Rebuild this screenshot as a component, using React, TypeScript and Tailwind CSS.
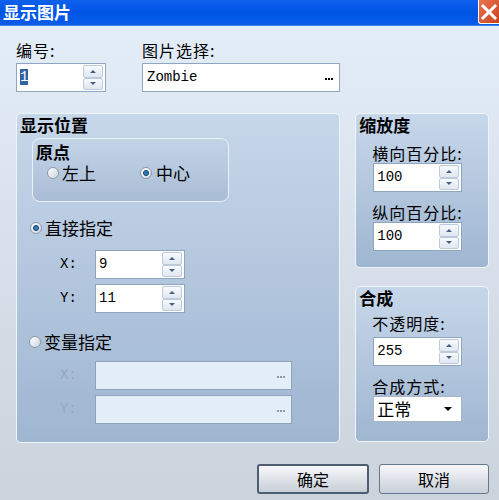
import type { ReactNode } from "react"

const cjk = "font-['Noto_Sans_CJK_SC','Noto_Sans_CJK_JP',sans-serif]"
const mono = "font-['Liberation_Mono',monospace]"

function Tri({ down }: { down?: boolean }) {
  return down ? (
    <div className="w-0 h-0 border-x-[3px] border-x-transparent border-t-[3px] border-t-[#4a5f80]" />
  ) : (
    <div className="w-0 h-0 border-x-[3px] border-x-transparent border-b-[3px] border-b-[#4a5f80]" />
  )
}

function Spin() {
  return (
    <div className="flex flex-col w-[20px] h-[25px] mr-[2px]">
      <div className="flex-1 flex items-center justify-center border border-[#bccadb] rounded-[2px] bg-linear-to-b from-[#f8fafd] to-[#dfe7f1]">
        <Tri />
      </div>
      <div className="flex-1 flex items-center justify-center border border-[#bccadb] rounded-[2px] bg-linear-to-b from-[#f8fafd] to-[#dfe7f1]">
        <Tri down />
      </div>
    </div>
  )
}

function NumBox({ value, w, selected }: { value: string; w: string; selected?: boolean }) {
  return (
    <div className={`${w} h-[29px] flex items-center bg-white border border-[#8fa6c0]`}>
      <div className={`flex-1 pl-[3px] ${mono} text-[14px] text-black`}>
        {selected ? <span className="bg-[#3262a8] text-white">{value}</span> : value}
      </div>
      <Spin />
    </div>
  )
}

function Dots({ dim }: { dim?: boolean }) {
  const c = dim ? "bg-[#8c9aab]" : "bg-black"
  return (
    <div className="flex gap-[1px] mr-[6px] mt-[3px]">
      <div className={`w-[2px] h-[2px] ${c}`} />
      <div className={`w-[2px] h-[2px] ${c}`} />
      <div className={`w-[2px] h-[2px] ${c}`} />
    </div>
  )
}

function Radio({ on }: { on?: boolean }) {
  return (
    <div className="w-[12px] h-[12px] rounded-full border border-[#8a99ab] bg-linear-to-br from-[#ffffff] to-[#cfd6df] flex items-center justify-center">
      {on && <div className="w-[6px] h-[6px] rounded-full bg-[#2d7cc0] border border-[#1a3f66]" />}
    </div>
  )
}

function Panel({ className, children }: { className: string; children: ReactNode }) {
  return (
    <div
      className={`${className} border border-[#eef4fb] rounded-[5px] bg-linear-to-b from-[#c7d7ea] to-[#9fb6d1] flex flex-col`}
    >
      {children}
    </div>
  )
}

function Title({ children }: { children: ReactNode }) {
  return <div className={`${cjk} font-bold text-[17px] leading-[22px] text-black pl-[3px]`}>{children}</div>
}

function Label({ children, className = "" }: { children: ReactNode; className?: string }) {
  return (
    <div className={`${cjk} text-[16px] tracking-[1px] leading-[20px] text-black whitespace-nowrap ${className}`}>
      {children}
    </div>
  )
}

export default function App() {
  return (
    <div className="w-[499px] h-[500px] flex flex-col overflow-hidden select-none">
      <div className="h-[26px] flex items-stretch bg-linear-to-b from-[#0d61ec] via-[#0055e5] to-[#0b5ce8] border-b border-[#3d84f0]">
        <div className={`flex-1 pl-[3px] ${cjk} font-bold text-[17px] leading-[24px] text-white`}>显示图片</div>
        <div className="w-[21px] h-[24px] bg-linear-to-br from-[#e9744f] to-[#c9401d] border-l border-b border-white rounded-bl-[3px] flex items-center justify-center">
          <svg width="18" height="18" viewBox="0 0 18 18">
            <path d="M3 3 L15 15 M15 3 L3 15" stroke="white" strokeWidth="3" strokeLinecap="square" />
          </svg>
        </div>
      </div>

      <div className="flex-1 flex flex-col pl-[16px] pr-[10px] pt-[14px] bg-linear-to-b from-[#e3edf8] to-[#cbd3dc]">
        <div className="flex">
          <div className="flex flex-col w-[90px]">
            <Label>编号:</Label>
            <div className="mt-[3px]">
              <NumBox value="1" w="w-[90px]" selected />
            </div>
          </div>
          <div className="flex flex-col ml-[36px] w-[198px]">
            <Label>图片选择:</Label>
            <div className="mt-[3px] h-[29px] flex items-center bg-white border border-[#8fa6c0]">
              <div className={`flex-1 pl-[4px] ${mono} text-[14px] text-black`}>Zombie</div>
              <Dots />
            </div>
          </div>
        </div>

        <div className="flex mt-[21px] h-[330px]">
          <Panel className="w-[325px] h-[330px]">
            <Title>显示位置</Title>
            <div className="mt-[2px] ml-[15px] w-[197px] h-[64px] border border-[#e9f1f9] rounded-[8px] bg-linear-to-b from-[#c3d4e7] to-[#a9bdd5] flex flex-col pt-[3px]">
              <div className={`${cjk} font-bold text-[17px] leading-[20px] pl-[3px]`}>原点</div>
              <div className={`flex items-center h-[22px] pl-[14px] ${cjk} text-[17px]`}>
                <div className="flex items-center gap-[3px] w-[93px]">
                  <Radio />
                  <span>左上</span>
                </div>
                <div className="flex items-center gap-[4px]">
                  <Radio on />
                  <span>中心</span>
                </div>
              </div>
            </div>

            <div className={`mt-[15px] pl-[13px] flex items-center gap-[3px] h-[22px] ${cjk} text-[17px]`}>
              <Radio on />
              <span>直接指定</span>
            </div>
            <div className="flex items-center mt-[11px] pl-[43px]">
              <span className={`${mono} text-[14px] w-[35px]`}>X:</span>
              <NumBox value="9" w="w-[90px]" />
            </div>
            <div className="flex items-center mt-[5px] pl-[43px]">
              <span className={`${mono} text-[14px] w-[35px]`}>Y:</span>
              <NumBox value="11" w="w-[90px]" />
            </div>

            <div className={`mt-[18px] pl-[12px] flex items-center gap-[3px] h-[22px] ${cjk} text-[17px]`}>
              <Radio />
              <span>变量指定</span>
            </div>
            <div className="flex items-center mt-[8px] pl-[43px]">
              <span className={`${mono} text-[14px] w-[35px] text-[#97a8bd]`}>X:</span>
              <div className="w-[197px] h-[29px] flex items-center justify-end bg-[#e4eef9] border border-[#8fa3ba]">
                <Dots dim />
              </div>
            </div>
            <div className="flex items-center mt-[5px] pl-[43px]">
              <span className={`${mono} text-[14px] w-[35px] text-[#97a8bd]`}>Y:</span>
              <div className="w-[197px] h-[29px] flex items-center justify-end bg-[#e4eef9] border border-[#8fa3ba]">
                <Dots dim />
              </div>
            </div>
          </Panel>

          <div className="flex flex-col ml-[15px] w-[134px]">
            <Panel className="h-[155px] pl-0">
              <Title>缩放度</Title>
              <div className="pl-[16px] flex flex-col">
                <Label className="mt-[7px]">横向百分比:</Label>
                <div className="pl-[1px]">
                  <NumBox value="100" w="w-[89px]" />
                </div>
                <Label className="mt-[10px]">纵向百分比:</Label>
                <div className="pl-[1px]">
                  <NumBox value="100" w="w-[89px]" />
                </div>
              </div>
            </Panel>
            <Panel className="h-[156px] mt-[18px]">
              <Title>合成</Title>
              <div className="pl-[16px] flex flex-col">
                <Label className="mt-[4px]">不透明度:</Label>
                <div className="pl-[1px] mt-[4px]">
                  <NumBox value="255" w="w-[89px]" />
                </div>
                <Label className="mt-[10px]">合成方式:</Label>
                <div className="pl-[1px]">
                  <div className="w-[89px] h-[26px] flex items-center bg-white border border-[#a9b5c4]">
                    <span className={`flex-1 pl-[3px] ${cjk} text-[17px] leading-[20px]`}>正常</span>
                    <div className="mr-[9px] w-0 h-0 border-x-[4px] border-x-transparent border-t-[4px] border-t-black" />
                  </div>
                </div>
              </div>
            </Panel>
          </div>
        </div>

        <div className="flex justify-end gap-[10px] mt-[21px]">
          <button className={`w-[112px] h-[30px] rounded-[3px] border-2 border-[#4f5d72] bg-linear-to-b from-[#f7f8fa] to-[#c8cfd8] ${cjk} text-[16px] text-black`}>
            确定
          </button>
          <button className={`w-[110px] h-[30px] rounded-[3px] border border-[#66768c] bg-linear-to-b from-[#f7f8fa] to-[#c8cfd8] ${cjk} text-[16px] text-black`}>
            取消
          </button>
        </div>
      </div>
    </div>
  )
}
